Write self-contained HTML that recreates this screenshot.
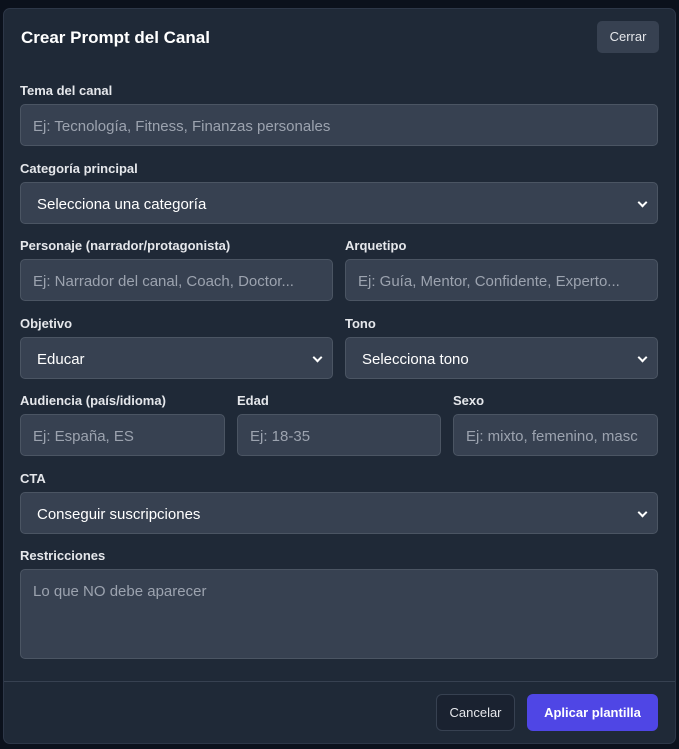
<!DOCTYPE html>
<html><head><meta charset="utf-8"><style>
*{box-sizing:border-box;margin:0;padding:0}
body{width:679px;height:749px;background:#0b111c;font-family:"Liberation Sans",sans-serif;position:relative;overflow:hidden}
.m{position:absolute;left:3px;top:8px;width:673px;height:736px;background:#1f2937;border:1px solid #2d3748;border-radius:7px}
.t{position:absolute;left:17px;top:19px;color:#fff;font-size:17px;font-weight:bold}
.close{position:absolute;left:593px;top:12px;width:62px;height:32px;background:#374151;border-radius:5px;color:#e5e7eb;font-size:13px;text-align:center;line-height:32px}
.l{position:absolute;color:#e5e7eb;font-size:13px;font-weight:bold}
.i{position:absolute;height:42px;background:#374151;border:1px solid #4b5563;border-radius:5px;color:#9ca3af;font-size:15px;padding:0 12px;line-height:43px;white-space:nowrap;overflow:hidden}
.s{color:#fff;padding-left:16px}
.s:after{content:"";position:absolute;right:11px;top:16px;width:5px;height:5px;border-right:2px solid #fff;border-bottom:2px solid #fff;transform:rotate(45deg)}
.f{position:absolute;border-top:1px solid #374151}
.b{position:absolute;top:694px;height:37px;border-radius:6px;font-size:13px;text-align:center;line-height:37px}
</style></head><body>
<div class="m">
<div class="t">Crear Prompt del Canal</div>
<div class="close">Cerrar</div>
</div>
<div class="l" style="left:20px;top:83px">Tema del canal</div>
<div class="i" style="left:20px;top:104px;width:638px">Ej: Tecnología, Fitness, Finanzas personales</div>
<div class="l" style="left:20px;top:161px">Categoría principal</div>
<div class="i s" style="left:20px;top:182px;width:638px">Selecciona una categoría</div>
<div class="l" style="left:20px;top:238px">Personaje (narrador/protagonista)</div>
<div class="l" style="left:345px;top:238px">Arquetipo</div>
<div class="i" style="left:20px;top:259px;width:313px">Ej: Narrador del canal, Coach, Doctor...</div>
<div class="i" style="left:345px;top:259px;width:313px">Ej: Guía, Mentor, Confidente, Experto...</div>
<div class="l" style="left:20px;top:316px">Objetivo</div>
<div class="l" style="left:345px;top:316px">Tono</div>
<div class="i s" style="left:20px;top:337px;width:313px">Educar</div>
<div class="i s" style="left:345px;top:337px;width:313px">Selecciona tono</div>
<div class="l" style="left:20px;top:393px">Audiencia (país/idioma)</div>
<div class="l" style="left:237px;top:393px">Edad</div>
<div class="l" style="left:453px;top:393px">Sexo</div>
<div class="i" style="left:20px;top:414px;width:205px">Ej: España, ES</div>
<div class="i" style="left:237px;top:414px;width:204px">Ej: 18-35</div>
<div class="i" style="left:453px;top:414px;width:205px">Ej: mixto, femenino, masc</div>
<div class="l" style="left:20px;top:471px">CTA</div>
<div class="i s" style="left:20px;top:492px;width:638px">Conseguir suscripciones</div>
<div class="l" style="left:20px;top:548px">Restricciones</div>
<div class="i" style="left:20px;top:569px;width:638px;height:90px;line-height:44px">Lo que NO debe aparecer</div>
<div class="f" style="left:4px;width:671px;top:681px"></div>
<div class="b" style="left:436px;width:79px;border:1px solid #374151;color:#e5e7eb;background:#1a2230;line-height:35px">Cancelar</div>
<div class="b" style="left:527px;width:131px;background:#4f46e5;color:#fff;font-weight:bold">Aplicar plantilla</div>
</body></html>
